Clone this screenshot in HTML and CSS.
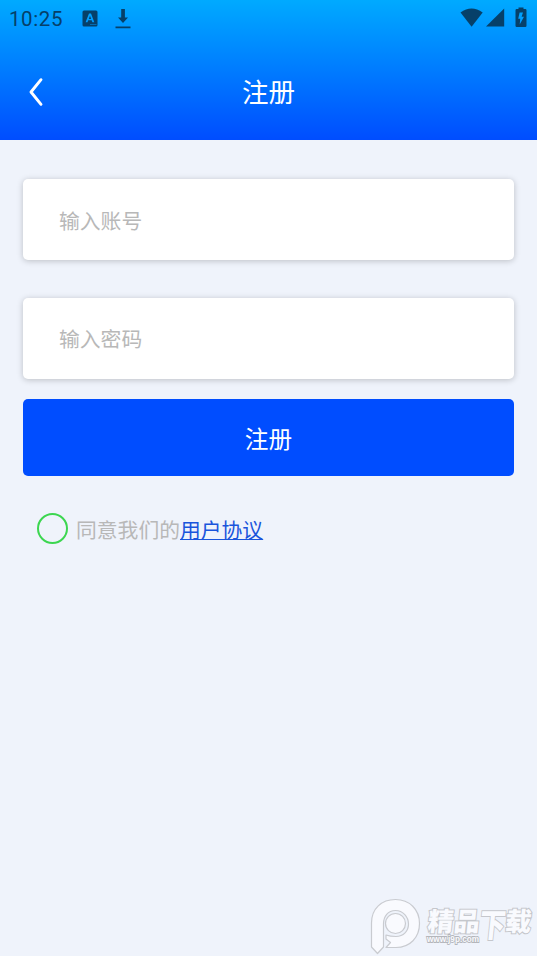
FILE: index.html
```html
<!DOCTYPE html>
<html lang="zh-CN">
<head>
<meta charset="utf-8">
<title>注册</title>
<link rel="stylesheet" href="styles.css">
</head>
<body>
<header class="header">
  <div class="status">
    <span class="clock">10:25</span>
    <svg class="lang" width="16" height="17" viewBox="0 0 16 17"><path fill="currentColor" fill-rule="evenodd" d="M2 .5h12q1.500 0 1.500 1.500v13q0 1.500-1.500 1.500H2Q.5 16.500.5 15V2Q.5.5 2 .5ZM7 3.500 3.600 12.200h1.900l.7-1.900h3.500l.7 1.900h1.900L9 3.500ZM8 5.700l1.200 3.300H6.800ZM8 14.600v.5h6.500v-.5Z"/></svg>
    <svg class="download" width="16" height="21" viewBox="0 0 16 21"><path fill="currentColor" d="M6.200 1h3.700v8.500H13L8 15 3 9.500h3.200ZM.5 18.400h15v1.900H.5Z"/></svg>
    <span class="spacer"></span>
    <svg class="wifi" width="24" height="20" viewBox="0 0 24 20"><path fill="currentColor" d="M.5 4.400Q11.500-3.500 22.700 4.400L11.600 18.700Z"/></svg>
    <svg class="signal" width="19" height="19" viewBox="0 0 19 19"><path fill="currentColor" d="M18.200.5v18H0Z"/></svg>
    <svg class="battery" width="12" height="21" viewBox="0 0 12 21"><path fill="currentColor" fill-rule="evenodd" d="M3.500.5h5v1.500h1.800q1.200 0 1.200 1.200v15.600q0 1.200-1.200 1.200H1.700Q.5 20 .5 18.800V3.200q0-1.200 1.200-1.200h1.800ZM4.600 5.500 3.200 11.800h2L4.700 17.500 9 9.700H6.600L8 5.500Z"/></svg>
  </div>
  <div class="nav">
    <svg class="back" width="16" height="30" viewBox="0 0 16 30"><path d="M13 2.700 3 15l10 12.300" fill="none" stroke="#fff" stroke-width="2.900" stroke-linecap="round" stroke-linejoin="round"/></svg>
    <h1 class="title">注册</h1>
  </div>
</header>
<main class="form">
  <input class="field" type="text" placeholder="输入账号">
  <input class="field" type="password" placeholder="输入密码">
  <button class="submit">注册</button>
  <div class="agree"><span class="check"></span><span>同意我们的<a class="link" href="#">用户协议</a></span></div>
</main>
<svg class="watermark" width="177" height="66" viewBox="0 0 177 66">
  <g fill="#f9fafe" stroke="#c9cbd0" stroke-width="1.200" stroke-linejoin="round">
    <path fill-rule="evenodd" d="M11.500 57V33C11.500 18.500 21.500 9.500 35.500 9.500S59.500 19.500 59.500 33.500 50 57.500 36 57.500H26L30.500 52.500 26 49V45Q30 46.500 36 46.500C43.500 46.500 48.500 41 48.500 34S43 20.500 35.500 20.500 23.500 26.500 23.500 34V57L17.500 63.500Z"/>
    <circle cx="35.500" cy="33.500" r="10"/>
  </g>
  <g class="brand" transform="translate(67 41) skewX(-6)">
    <text x="0" y="0" font-size="26" textLength="52" lengthAdjust="spacingAndGlyphs">精品</text>
    <text x="52" y="6" font-size="33" textLength="26" lengthAdjust="spacingAndGlyphs">下</text>
    <text x="77.500" y="0" font-size="26">载</text>
  </g>
  <text class="site" x="67" y="52" textLength="52" lengthAdjust="spacingAndGlyphs">www.j9p.com</text>
</svg>
</body>
</html>
```

FILE: styles.css
```css
* {
  box-sizing: border-box;
}

body {
  margin: 0;
  min-height: 956px;
  background: #eff3fb;
  font-family: "Noto Sans CJK SC", sans-serif;
}

.header {
  height: 140px;
  background: linear-gradient(#00aaff, #004dff);
}

.status {
  display: flex;
  align-items: flex-start;
  height: 44px;
  padding: 7px 10px 0 9px;
  color: #064069;
}

.clock {
  width: 73px;
  font: 400 20.500px/24px Roboto, sans-serif;
  letter-spacing: 0.600px;
}

.lang {
  margin-top: 3px;
}

.download {
  margin: 1px 0 0 17px;
}

.spacer {
  flex: 1;
}

.wifi {
  margin-top: 1px;
}

.signal {
  margin: 1px 10px 0 2px;
}

.nav {
  display: grid;
  grid-template-columns: 60px 1fr 60px;
  align-items: center;
  height: 96px;
}

.back {
  margin-left: 28px;
}

.title {
  margin: -3px 0 0;
  color: #fff;
  font-size: 26.500px;
  font-weight: 400;
  text-align: center;
}

.form {
  display: flex;
  flex-direction: column;
  padding: 39px 23px 0;
}

.field {
  width: 100%;
  height: 81px;
  margin: 0 0 37.500px;
  padding: 0 36px;
  border: 0;
  border-radius: 5px;
  outline: 0;
  background: #fff;
  box-shadow: 0 1px 6px rgba(0, 0, 0, 0.22);
  font: 20.800px "Noto Sans CJK SC", sans-serif;
}

.field + .submit {
  margin-top: -17px;
}

.field::placeholder {
  color: #b8b8b8;
  opacity: 1;
}

.submit {
  height: 76.500px;
  padding: 2px 0 0;
  border: 0;
  border-radius: 5px;
  background: #004dff;
  color: #fff;
  font: 23.700px "Noto Sans CJK SC", sans-serif;
}

.agree {
  display: flex;
  align-items: center;
  height: 32px;
  margin: 37px 0 0 14px;
  color: #b8b8b8;
  font-size: 20.800px;
}

.check {
  width: 31px;
  height: 31px;
  margin-right: 8px;
  border: 2px solid #3cd650;
  border-radius: 50%;
}

.link {
  color: #1a55dc;
  text-decoration-thickness: 1px;
}

.watermark {
  position: absolute;
  left: 360px;
  top: 890px;
}

.brand {
  font-family: "Noto Sans CJK SC", sans-serif;
  font-weight: 900;
  fill: #f9fafe;
  stroke: #c5c7cc;
  stroke-width: 2px;
  paint-order: stroke;
}

.site {
  font: bold 9px "Liberation Sans", sans-serif;
  fill: #f9fafe;
  stroke: #b4b6bb;
  stroke-width: 1.800px;
  paint-order: stroke;
}
```
